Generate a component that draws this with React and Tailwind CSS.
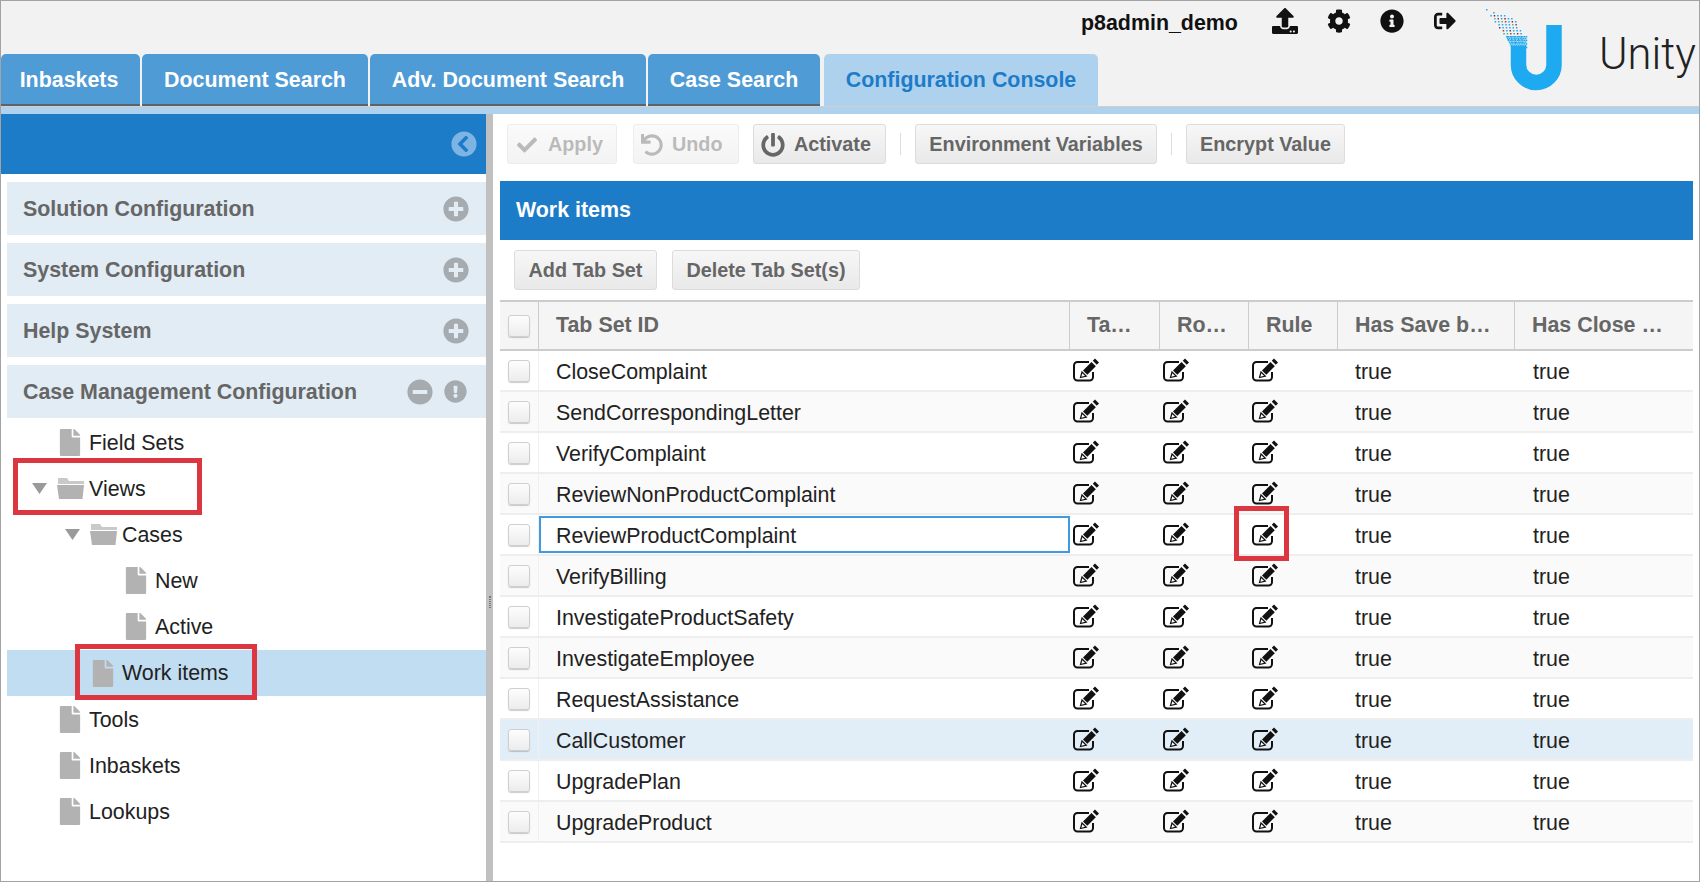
import {
  FaCheck,
  FaChevronCircleLeft,
  FaCog,
  FaExclamationCircle,
  FaFile,
  FaInfoCircle,
  FaMinusCircle,
  FaPlusCircle,
  FaPowerOff,
  FaSignOutAlt,
  FaUndo,
  FaUpload,
} from 'react-icons/fa'

const tabs = [
  { label: 'Inbaskets', width: 'w-[139px] pr-[3px]' },
  { label: 'Document Search', width: 'w-[226px]' },
  { label: 'Adv. Document Search', width: 'w-[276px]' },
  { label: 'Case Search', width: 'w-[172px]' },
]

const accordions = ['Solution Configuration', 'System Configuration', 'Help System']

const rows = [
  'CloseComplaint',
  'SendCorrespondingLetter',
  'VerifyComplaint',
  'ReviewNonProductComplaint',
  'ReviewProductComplaint',
  'VerifyBilling',
  'InvestigateProductSafety',
  'InvestigateEmployee',
  'RequestAssistance',
  'CallCustomer',
  'UpgradePlan',
  'UpgradeProduct',
]

const gridCols = 'grid grid-cols-[39px_531px_90px_89px_89px_177px_178px]'

// speckled trail coming off the top of the U
const dotColors = ['#1eaaf1', '#b3323f', '#1eaaf1', '#6fb04a', '#1eaaf1', '#1eaaf1', '#7a2a4a', '#1eaaf1', '#1eaaf1']
const dots = []
for (let row = 0; row < 12; row++) {
  const y = 8 + row * 3
  const left = 6 + (y - 8) * 0.72
  const right = y < 18 ? 6 + (y - 8) * 3 : 36 + (y - 18) * 0.35
  let col = 0
  for (let x = left + (row % 2) * 1.6; x <= right; x += 3.4) {
    if (y >= 14 || (row + col) % 2 === 0) {
      dots.push({ x, y, fill: dotColors[(row * 4 + col * 7) % dotColors.length] })
    }
    col++
  }
}
for (let y = 35; y < 46; y += 1.8) {
  for (let x = 26 + (y - 35) * 0.5; x < 46; x += 1.8) {
    dots.push({ x, y, fill: '#1eaaf1' })
  }
}

const Logo = () => (
  <svg width="90" height="95" viewBox="0 0 90 95" className="shrink-0">
    {dots.map((d, i) => (
      <rect key={i} x={d.x} y={d.y} width="1.5" height="1.5" fill={d.fill} />
    ))}
    <path
      d="M74 24 V63.75 A17.75 17.75 0 0 1 38.5 63.75 V45"
      fill="none"
      stroke="#1eaaf1"
      strokeWidth="15.5"
    />
  </svg>
)

const EditIcon = () => (
  <svg width="27" height="24" viewBox="0 0 27 24" className="shrink-0">
    <path
      d="M17 4 H5.5 A3.5 3.5 0 0 0 2 7.5 V19 A3.5 3.5 0 0 0 5.5 22.5 H17.5 A3.5 3.5 0 0 0 21 19 V14"
      fill="none"
      stroke="#111"
      strokeWidth="2"
    />
    <polygon points="11,12.5 19.5,4 23.8,8.3 15.3,16.8" fill="#111" />
    <path d="M8.5 19.5 L10 14 L14.3 18.2z" fill="#fff" stroke="#111" strokeWidth="1.2" />
    <polygon points="20.8,2.8 23,0.6 27,4.6 24.8,6.8" fill="#111" />
  </svg>
)

const FolderIcon = () => (
  <svg width="27" height="21" viewBox="0 0 27 21" className="shrink-0">
    <path d="M1 0 h9 l2 3 h15 v3 H1z" fill="#c9c9c9" />
    <path d="M0 7 h27 l-1.5 14 H2z" fill="#b2b2b2" />
  </svg>
)

const Caret = () => (
  <svg width="15" height="11" viewBox="0 0 15 11" className="shrink-0">
    <path d="M0 0 h15 L7.5 11z" fill="#9a9a9a" />
  </svg>
)

const FileRow = ({ label, indent, selected }) => (
  <div className={`h-[46.2px] flex items-center gap-[8px] ${indent} ${selected ? 'bg-[#c1ddf1]' : ''}`}>
    <FaFile className="w-[22px] h-[27px] text-[#b2b2b2] shrink-0" />
    <span className="pt-[1px] text-[21.4px] text-[#222]">{label}</span>
  </div>
)

const FolderRow = ({ label, indent }) => (
  <div className={`h-[46.2px] flex items-center ${indent}`}>
    <Caret />
    <span className="w-[10px]" />
    <FolderIcon />
    <span className="pt-[1px] text-[21.4px] text-[#222] ml-[5px]">{label}</span>
  </div>
)

const ToolButton = ({ label, icon, disabled, width }) => (
  <button
    className={`h-[40px] ${width} flex items-center gap-[9px] pt-[1px] rounded-[3px] border border-[#dcdcdc] bg-gradient-to-b from-[#f7f7f7] to-[#e9e9e9] text-[19.8px] font-bold ${
      icon ? 'justify-start pl-[7px]' : 'justify-center'
    } ${disabled ? 'opacity-50 text-[#777]' : 'text-[#666]'}`}
  >
    {icon}
    {label}
  </button>
)

const Checkbox = () => (
  <div className="w-[22px] h-[22px] rounded-[3px] border border-[#cfcfcf] bg-gradient-to-b from-[#fdfdfd] to-[#ececec] shadow-[0_1px_1px_rgba(0,0,0,0.2)]" />
)

const HeadCell = ({ children, last }) => (
  <div className={`flex items-center pl-[17px] text-[21.4px] font-bold text-[#666] ${last ? '' : 'border-r border-[#ccc]'}`}>
    {children}
  </div>
)

const EditCell = () => (
  <div className="flex items-center pl-[2px] pb-[2px]">
    <EditIcon />
  </div>
)

const App = () => {
  return (
    <div className="relative h-[882px] w-full flex flex-col overflow-hidden border border-[#a3a3a3] bg-white font-['Liberation_Sans',Arial,sans-serif]">
      <header className="h-[106px] shrink-0 flex bg-[#f2f2f2] border-b border-[#cfcfcf]">
        <nav className="self-end flex gap-[2px]">
          {tabs.map((tab) => (
            <div
              key={tab.label}
              className={`${tab.width} h-[52px] flex items-center justify-center pt-[3px] rounded-t-[5px] border-b-2 border-[#5d6368] bg-[#4f9bd6] text-[21.4px] font-bold text-white`}
            >
              {tab.label}
            </div>
          ))}
          <div className="w-[274px] h-[52px] ml-[2px] flex items-center justify-center pt-[1px] rounded-t-[5px] bg-[#aed2ee] text-[21.4px] font-bold text-[#1d7cc8]">
            Configuration Console
          </div>
        </nav>
        <div className="ml-[-17px] flex items-start min-w-0">
          <span className="mt-[6px] text-[21.4px] font-bold text-[#111] shrink-0">p8admin_demo</span>
          <div className="mt-[7px] ml-[34px] flex items-center gap-[29px] text-[#111] shrink-0">
            <FaUpload className="w-[26px] h-[26px]" />
            <FaCog className="w-[24px] h-[24px]" />
            <FaInfoCircle className="w-[24px] h-[24px]" />
            <FaSignOutAlt className="w-[24px] h-[22px]" />
          </div>
          <div className="ml-[23px] flex items-start shrink-0">
            <Logo />
            <span className="mt-[29px] ml-[29px] text-[43.5px] leading-[50px] font-['Roboto',sans-serif] font-light text-[#222]">
              Unity
            </span>
          </div>
        </div>
      </header>
      <div className="h-[7px] shrink-0 bg-[#aed2ee]" />

      <main className="flex-1 flex min-h-0">
        <aside className="w-[485px] shrink-0 flex flex-col">
          <div className="h-[60px] shrink-0 flex items-center justify-end pr-[9px] bg-[#1d7cc8]">
            <FaChevronCircleLeft className="w-[26px] h-[26px] text-[#7db4e3]" />
          </div>
          <div className="pl-[6px] pt-[8px] flex flex-col gap-[8px]">
            {accordions.map((name) => (
              <div key={name} className="h-[53px] flex items-center justify-between pl-[16px] pr-[17px] bg-[#e1ecf5] text-[21.4px] font-bold text-[#666]">
                <span className="pt-[2px]">{name}</span>
                <FaPlusCircle className="w-[26px] h-[26px] text-[#a5abaf]" />
              </div>
            ))}
            <div className="h-[53px] flex items-center pl-[16px] pr-[19px] bg-[#e1ecf5] text-[21.4px] font-bold text-[#666]">
              <span className="pt-[2px]">Case Management Configuration</span>
              <FaMinusCircle className="ml-auto w-[26px] h-[26px] text-[#a5abaf]" />
              <FaExclamationCircle className="ml-[11px] w-[23px] h-[23px] text-[#a5abaf]" />
            </div>
          </div>
          <div className="pl-[6px] pt-[1px]">
            <FileRow label="Field Sets" indent="pl-[52px]" />
            <FolderRow label="Views" indent="pl-[25px]" />
            <FolderRow label="Cases" indent="pl-[58px]" />
            <FileRow label="New" indent="pl-[118px]" />
            <FileRow label="Active" indent="pl-[118px]" />
            <FileRow label="Work items" indent="pl-[85px]" selected />
            <FileRow label="Tools" indent="pl-[52px]" />
            <FileRow label="Inbaskets" indent="pl-[52px]" />
            <FileRow label="Lookups" indent="pl-[52px]" />
          </div>
        </aside>

        <div className="w-[7px] shrink-0 bg-[#c0c0c0] flex justify-center pt-[482px]">
          <div className="w-[2px] h-[12px] border-x border-dotted border-[#777]" />
        </div>

        <section className="flex-1 min-w-0 pl-[7px] pr-[6px]">
          <div className="h-[67px] pt-[10px] pl-[7px] flex items-start">
            <ToolButton label="Apply" width="w-[110px]" disabled icon={<FaCheck className="w-[24px] h-[20px]" />} />
            <div className="ml-[16px]">
              <ToolButton label="Undo" width="w-[106px]" disabled icon={<FaUndo className="w-[22px] h-[22px]" />} />
            </div>
            <div className="ml-[14px]">
              <ToolButton label="Activate" width="w-[133px]" icon={<FaPowerOff className="w-[24px] h-[24px]" />} />
            </div>
            <div className="ml-[14px] mr-[14px] mt-[9px] h-[22px] w-px bg-[#ddd]" />
            <ToolButton label="Environment Variables" width="w-[242px]" />
            <div className="ml-[14px] mr-[14px] mt-[9px] h-[22px] w-px bg-[#ddd]" />
            <ToolButton label="Encrypt Value" width="w-[159px]" />
          </div>

          <div className="h-[59px] flex items-center pl-[16px] bg-[#1d7cc8] text-[21.4px] font-bold text-white">
            Work items
          </div>

          <div className="h-[60px] pt-[10px] pl-[14px] flex items-start gap-[15px]">
            <ToolButton label="Add Tab Set" width="w-[143px]" />
            <ToolButton label="Delete Tab Set(s)" width="w-[188px]" />
          </div>

          <div className={`${gridCols} h-[51px] border-y-2 border-[#ccc] bg-[#f5f5f5]`}>
            <div className="flex items-center justify-center border-r border-[#ccc]">
              <Checkbox />
            </div>
            <HeadCell>Tab Set ID</HeadCell>
            <HeadCell>Ta…</HeadCell>
            <HeadCell>Ro…</HeadCell>
            <HeadCell>Rule</HeadCell>
            <HeadCell>Has Save b…</HeadCell>
            <HeadCell last>Has Close …</HeadCell>
          </div>

          {rows.map((name, i) => {
            const bg = name === 'CallCustomer' ? 'bg-[#e1edf7]' : i % 2 === 1 ? 'bg-[#fafafa]' : 'bg-white'
            const focused = name === 'ReviewProductComplaint'
            return (
              <div key={name} className={`${gridCols} h-[41px] border-b-2 border-[#eeeeee] text-[21.4px] text-[#222] ${bg}`}>
                <div className="flex items-center justify-center pt-[1px] border-r border-[#f0f0f0]">
                  <Checkbox />
                </div>
                <div
                  className={
                    focused
                      ? 'self-center h-[37px] flex items-center pl-[16px] pt-[3px] border border-[#3f9ae0] shadow-[inset_0_0_0_1px_#3f9ae0]'
                      : 'flex items-center pl-[17px] pt-[3px]'
                  }
                >
                  {name}
                </div>
                <EditCell />
                <EditCell />
                <EditCell />
                <div className="flex items-center pl-[17px] pt-[3px]">true</div>
                <div className="flex items-center pl-[18px] pt-[3px]">true</div>
              </div>
            )
          })}
        </section>
      </main>

      {/* red callouts drawn on top of the screen */}
      <div className="absolute left-[12px] top-[457px] w-[189px] h-[57px] border-[5px] border-[#dc3741]" />
      <div className="absolute left-[74px] top-[643px] w-[182px] h-[56px] border-[5px] border-[#dc3741]" />
      <div className="absolute left-[1233px] top-[505px] w-[55px] h-[55px] border-[5px] border-[#dc3741]" />
    </div>
  )
}

export default App
